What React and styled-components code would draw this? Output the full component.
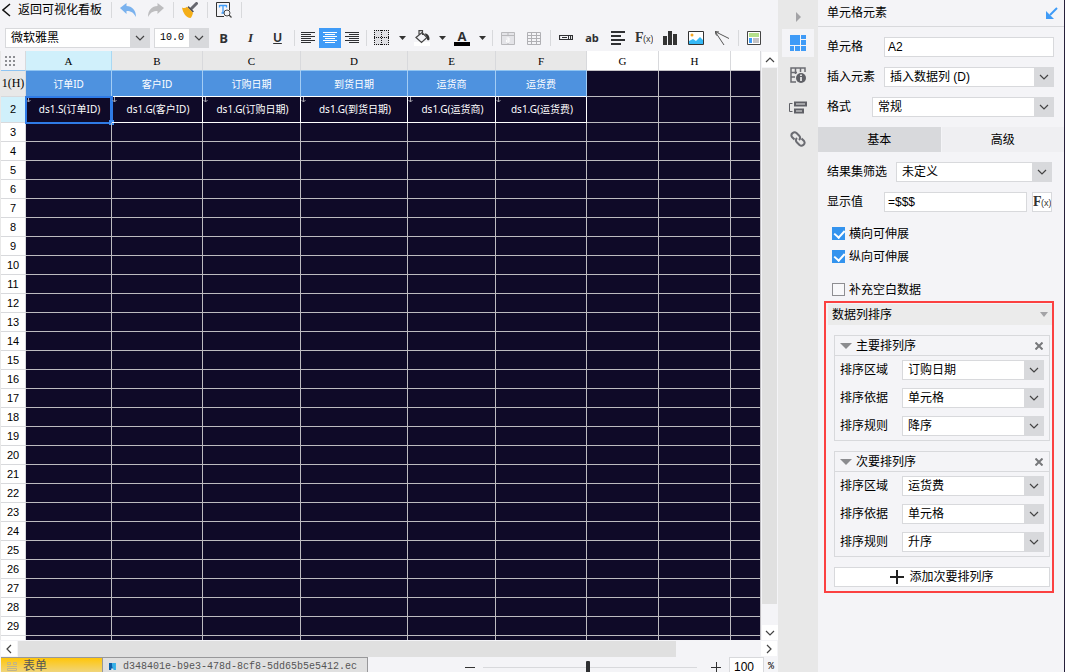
import React from "react";
import styled, { createGlobalStyle, css } from "styled-components";

const sans = `"Liberation Sans", "Noto Sans CJK SC", sans-serif`;
const mono = `"Liberation Mono", "Noto Sans CJK SC", monospace`;
const color = {
  page: "#f4f4f7",
  line: "#d8d9dc",
  strip: "#e8e8e8",
  blue: "#3f9bf7",
  cell: "#0f0a28",
  ink: "#2f3033",
};

const GlobalStyle = createGlobalStyle`
  * { box-sizing: border-box; }
  body { margin: 0; background: ${color.page}; color: #000; font: 12px/16px ${sans}; }
  button, input, select { font: inherit; color: inherit; margin: 0; padding: 0; border: 0; border-radius: 0; background: none; outline: none; }
  svg { display: block; }
`;

const Shell = styled.div`
  display: flex;
  height: 100vh;
  overflow: hidden;
`;
const Workspace = styled.main`
  flex: 1;
  min-width: 0;
  display: flex;
  flex-direction: column;
`;
const TopBar = styled.header`
  display: flex;
  align-items: center;
  height: 20px;
`;
const BackButton = styled.button`
  display: flex;
  align-items: center;
  gap: 7px;
  width: 108px;
  padding-left: 2px;
  white-space: nowrap;
`;
const Toolbar = styled.div`
  display: flex;
  align-items: center;
  height: 31px;
  padding: 5px 0 0 5px;
`;
const Separator = styled.i`
  flex: none;
  width: 1px;
  height: 16px;
  margin: 0 2px 0 3px;
  background: ${color.line};
`;
const Tool = styled.button`
  flex: none;
  display: flex;
  align-items: center;
  justify-content: center;
  width: ${(p) => p.$w || 26}px;
  height: 20px;
  background: ${(p) => (p.$active ? color.blue : "none")};
  color: ${(p) => (p.$active ? "#fff" : color.ink)};
`;
const Letter = styled.span`
  font: ${(p) => p.$font};
  text-decoration: ${(p) => (p.$underline ? "underline" : "none")};
`;
const ColorLetter = styled.span`
  width: 16px;
  height: 16px;
  border-bottom: 4px solid #000;
  font: bold 13px/12px "Open Sans", sans-serif;
  text-align: center;
`;
const FontControls = styled.div`
  display: flex;
  gap: 4px;
  margin-right: 1px;
`;

const SelectBox = styled.div`
  display: grid;
  grid-template-columns: minmax(0, 1fr) 20px;
  flex: ${(p) => (p.$w ? "none" : 1)};
  width: ${(p) => (p.$w ? p.$w + "px" : "auto")};
  min-width: 0;
  height: 20px;
  border: 1px solid ${color.line};
  border-right: 0;
  background: #fff;
`;
const NativeSelect = styled.select`
  grid-area: 1 / 1 / 2 / 3;
  appearance: none;
  width: 100%;
  height: 18px;
  padding: 0 20px 0 5px;
  font-family: ${(p) => (p.$mono ? mono : sans)};
  font-size: ${(p) => (p.$mono ? 10 : 12)}px;
`;
const SelectArrow = styled.span`
  grid-area: 1 / 2;
  display: flex;
  align-items: center;
  justify-content: center;
  background: ${color.line};
  pointer-events: none;
`;

const GridArea = styled.section`
  flex: 1;
  min-height: 0;
  display: flex;
`;
const GridView = styled.div`
  flex: 1;
  min-width: 0;
  overflow: hidden;
  border-left: 1px solid ${color.strip};
  background: ${color.cell};
`;
const Sheet = styled.table`
  width: 100%;
  table-layout: fixed;
  border-collapse: separate;
  border-spacing: 0;
`;
const Row = styled.tr`
  height: ${(p) => p.$h}px;
`;
const headBg = { selected: "#d0f0fb", used: "#e8e8e8", empty: "#fff" };
const ColHead = styled.th`
  padding: 2px 0 0;
  border-right: 1px solid ${(p) => (p.$state === "selected" ? "#a8d8f4" : color.line)};
  border-bottom: 1px solid ${(p) => (p.$state === "empty" ? "#c4c2c6" : "#8fc4f2")};
  background: ${(p) => headBg[p.$state]};
  font: 11px/17px "Liberation Serif", serif;
`;
const Corner = styled(ColHead)`
  background: ${color.page};
  svg { margin: 0 auto 0 4px; }
`;
const RowHead = styled.th`
  padding: 0;
  border-right: 1px solid ${color.line};
  border-bottom: 1px solid ${color.line};
  background: ${(p) => headBg[p.$state]};
  font: ${(p) => (p.$serif ? `12px/17px "Liberation Serif", serif` : `11px/17px ${sans}`)};
  white-space: nowrap;
`;
const Cell = styled.td`
  position: relative;
  padding: 0;
  border-right: 1px solid #bdbbc0;
  border-bottom: 1px solid #bdbbc0;
  font: 10px/16px "Noto Sans", "Noto Sans CJK SC", sans-serif;
  text-align: center;
  white-space: nowrap;
  color: #fff;
  ${(p) => p.$kind === "title" && css`
    background: #4e92df;
    border-right-color: #a3cdf5;
    border-bottom-color: #fff;
  `}
  ${(p) => p.$kind === "field" && css`
    padding: 0 0 2px 2px;
    border-color: #fff;
  `}
`;
const ExpandMark = styled.svg`
  position: absolute;
  left: 0;
  top: 0;
`;
const Selection = styled.span`
  position: absolute;
  inset: -1px -2px -2px -1px;
  border: 3px solid #2f7be6;
  border-width: 2px 3px 2px 2px;
  &::after {
    content: "";
    position: absolute;
    right: -4px;
    bottom: -3px;
    width: 5px;
    height: 5px;
    background: #3f8cf0;
  }
`;

const VScroll = styled.div`
  flex: none;
  display: flex;
  flex-direction: column;
  width: 17px;
  padding: 1px 1px 0 1px;
`;
const HScroll = styled.div`
  flex: none;
  display: flex;
  height: 17px;
  padding: 1px 1px 0 1px;
`;
const ScrollButton = styled.button`
  flex: none;
  display: flex;
  align-items: center;
  justify-content: center;
  width: 16px;
  height: 15px;
  background: #fff;
`;
const VThumb = styled.div`
  flex: 25;
  margin-top: 1px;
  background: #e0e0e0;
`;
const HThumb = styled.div`
  flex: 31;
  margin-left: 1px;
  background: #e0e0e0;
`;
const Rest = styled.div`
  flex: ${(p) => p.$grow};
`;

const StatusBar = styled.footer`
  flex: none;
  display: flex;
  align-items: flex-start;
  height: 15px;
  overflow: hidden;
  padding-left: 1px;
`;
const SheetTab = styled.button`
  display: flex;
  align-items: center;
  gap: ${(p) => (p.$current ? 6 : 7)}px;
  height: 20px;
  padding: 0 10px 2px 6px;
  width: ${(p) => (p.$current ? 101 : 266)}px;
  border: 1px solid #98989a;
  border-left-width: ${(p) => (p.$current ? 0 : 1)}px;
  border-right-width: ${(p) => (p.$current ? 0 : 1)}px;
  background: ${(p) => (p.$current ? "linear-gradient(#ffc60a, #ecd99a)" : "#e0e0e0")};
  color: #555;
  font: ${(p) => (p.$current ? `12px/15px ${sans}` : `10px/15px ${mono}`)};
  white-space: nowrap;
`;
const Zoom = styled.div`
  display: flex;
  align-items: center;
  height: 20px;
  margin-left: auto;
`;
const ZoomButton = styled.button`
  display: flex;
  justify-content: center;
  width: 18px;
`;
const ZoomSlider = styled.input`
  appearance: none;
  width: 214px;
  height: 12px;
  margin: 0 10px 0 4px;
  &::-webkit-slider-runnable-track { height: 1px; background: ${color.line}; }
  &::-webkit-slider-thumb {
    appearance: none;
    width: 4px;
    height: 12px;
    margin-top: -6px;
    border-radius: 1px;
    background: ${color.ink};
  }
`;
const ZoomValue = styled.input`
  width: 35px;
  height: 20px;
  padding: 0 0 0 4px;
  margin-left: 4px;
  border: 1px solid ${color.line};
  background: #fff;
  font-size: 12px;
`;
const Percent = styled.span`
  width: 14px;
  font: 10px/16px ${mono};
  text-align: center;
`;

const SideStrip = styled.nav`
  flex: none;
  display: flex;
  flex-direction: column;
  gap: 4px;
  align-items: center;
  width: 40px;
  padding-top: 9px;
  background: ${color.strip};
`;
const SideItem = styled.button`
  display: flex;
  align-items: center;
  justify-content: center;
  width: 32px;
  height: ${(p) => (p.$small ? 16 : 28)}px;
  background: ${(p) => (p.$active ? color.page : "none")};
`;

const Panel = styled.aside`
  flex: none;
  width: 247px;
  border-right: 1px solid #26203a;
`;
const PanelTitle = styled.div`
  display: flex;
  align-items: center;
  justify-content: space-between;
  height: 27px;
  padding: 0 6px 0 9px;
  border-bottom: 1px solid ${color.line};
`;
const Fields = styled.div`
  display: flex;
  flex-direction: column;
  gap: 10px;
  padding: 10px ${(p) => p.$right || 10}px 0 9px;
`;
const Field = styled.div`
  display: flex;
  align-items: center;
`;
const Label = styled.label`
  flex: none;
  width: ${(p) => p.$w}px;
  white-space: nowrap;
`;
const TextBox = styled.input`
  flex: 1;
  min-width: 0;
  height: 20px;
  padding: 0 4px 0 3px;
  border: 1px solid ${color.line};
  background: #fff;
`;
const FormulaButton = styled.button`
  display: flex;
  align-items: center;
  justify-content: center;
  width: 20px;
  height: 20px;
  margin-left: 5px;
  border: 1px solid ${color.line};
  background: #fff;
`;
const Tabs = styled.div`
  display: grid;
  grid-template-columns: 1fr 1fr;
  gap: 1px;
  height: 25px;
  margin-top: 10px;
`;
const Tab = styled.button`
  background: ${(p) => (p.$active ? "#d8d9dc" : "#efeff2")};
`;
const Checks = styled.div`
  display: flex;
  flex-direction: column;
  padding: 10px 0 0 14px;
`;
const CheckRow = styled.label`
  display: flex;
  align-items: center;
  gap: 4px;
  height: 23px;
  margin-top: ${(p) => (p.$apart ? 10 : 0)}px;
`;
const CheckBox = styled.input`
  appearance: none;
  width: 13px;
  height: 13px;
  border: 1px solid #8e8e92;
  background: #f8f8fa;
  &:checked { border-color: #3393ee; background: #3393ee; }
  &:checked::after {
    content: "";
    display: block;
    width: 5px;
    height: 8px;
    margin: 0 0 0 3px;
    border: solid #fff;
    border-width: 0 2px 2px 0;
    transform: rotate(42deg);
  }
`;

const SortSection = styled.section`
  margin: 0 10px 0 6px;
  padding: 1px 0 4px 2px;
  border: 2px solid #fb4141;
`;
const SortTitle = styled.button`
  display: flex;
  align-items: center;
  justify-content: space-between;
  width: 100%;
  height: 21px;
  padding: 0 4px 0 4px;
  background: #ebebeb;
`;
const SortBody = styled.div`
  display: flex;
  flex-direction: column;
  gap: 10px;
  padding: 10px 2px 0 6px;
`;
const SortGroup = styled.div`
  border: 1px solid ${color.line};
`;
const GroupHead = styled.div`
  display: flex;
  align-items: center;
  height: 20px;
  padding: 0 6px 0 5px;
  gap: 4px;
  border-bottom: 1px solid ${color.line};
`;
const GroupName = styled.span`
  flex: 1;
`;
const GroupFields = styled.div`
  display: flex;
  flex-direction: column;
  gap: 8px;
  padding: 4px 5px;
`;
const AddButton = styled.button`
  display: flex;
  align-items: center;
  justify-content: center;
  gap: 5px;
  height: 20px;
  border: 1px solid ${color.line};
  background: #fff;
`;

function Icon({ w = 16, h = 16, children, ...rest }) {
  return (
    <svg width={w} height={h} viewBox={`0 0 ${w} ${h}`} fill="none" stroke="currentColor" aria-hidden="true" {...rest}>
      {children}
    </svg>
  );
}
const chevrons = {
  down: "M1 3l4 4 4-4",
  up: "M1 7l4-4 4 4",
  left: "M7 1L3 5l4 4",
  right: "M3 1l4 4-4 4",
};
const Chevron = ({ to = "down" }) => (
  <Icon w={10} h={10} stroke="#444" strokeWidth="1.2"><path d={chevrons[to]} /></Icon>
);
const Caret = ({ fill = "#333", w = 7, h = 4 }) => (
  <Icon w={w} h={h} stroke="none"><path fill={fill} d={`M0 0H${w}L${w / 2} ${h}Z`} /></Icon>
);
const Lines = ({ rows, ...rest }) => (
  <Icon {...rest} shapeRendering="crispEdges">
    {rows.map(([x, w], i) => <path key={i} d={`M${x} ${2.5 + i * 2}h${w}`} />)}
  </Icon>
);
const Fx = () => (
  <Icon w={18} h={16} stroke="none" fill="#333">
    <text x="0" y="12" fontFamily="Liberation Serif, serif" fontSize="14" fontWeight="bold">F</text>
    <text x="8" y="12" fontFamily="Liberation Sans, sans-serif" fontSize="9">(x)</text>
  </Icon>
);

function Select({ id, label, value, w, mono: isMono }) {
  return (
    <SelectBox $w={w}>
      <NativeSelect id={id} aria-label={label} defaultValue={value} $mono={isMono}>
        <option>{value}</option>
      </NativeSelect>
      <SelectArrow><Chevron /></SelectArrow>
    </SelectBox>
  );
}

const columns = [
  ["A", 86, "订单ID", "ds1.S(订单ID)"],
  ["B", 91, "客户ID", "ds1.G(客户ID)"],
  ["C", 98, "订购日期", "ds1.G(订购日期)"],
  ["D", 107, "到货日期", "ds1.G(到货日期)"],
  ["E", 88, "运货商", "ds1.G(运货商)"],
  ["F", 91, "运货费", "ds1.G(运货费)"],
  ["G", 72],
  ["H", 72],
  [""],
];
const emptyRows = [...Array.from({ length: 27 }, (_, i) => i + 3), ""];

function Spreadsheet() {
  return (
    <Sheet>
      <colgroup>
        <col width="25" />
        {columns.map(([name, w]) => <col key={name} width={w} />)}
      </colgroup>
      <thead>
        <Row $h={20}>
          <Corner $state="used">
            <Icon w={12} h={11} stroke="none" fill="#8d8e92">
              {[0, 4, 8].map((y) => [0, 4, 8].map((x) => <rect key={`${x}-${y}`} x={x} y={y} width="2" height="2" />))}
            </Icon>
          </Corner>
          {columns.map(([name, , title], i) => (
            <ColHead key={name} $state={i === 0 ? "selected" : title ? "used" : "empty"}>{name}</ColHead>
          ))}
        </Row>
      </thead>
      <tbody>
        <Row $h={26}>
          <RowHead $state="used" $serif>1(H)</RowHead>
          {columns.map(([name, , title]) => <Cell key={name} $kind={title && "title"}>{title}</Cell>)}
        </Row>
        <Row $h={26}>
          <RowHead $state="selected">2</RowHead>
          {columns.map(([name, , , field], i) => (
            <Cell key={name} $kind={field && "field"}>
              {field && (
                <ExpandMark width="6" height="7" fill="none" stroke="#a5a3ad">
                  <path d="M2.5 0v5M0.5 3l2 2 2-2" />
                </ExpandMark>
              )}
              {field}
              {i === 0 && <Selection />}
            </Cell>
          ))}
        </Row>
        {emptyRows.map((n) => (
          <Row key={n} $h={19}>
            <RowHead $state="empty">{n}</RowHead>
            {columns.map(([name]) => <Cell key={name} />)}
          </Row>
        ))}
      </tbody>
    </Sheet>
  );
}

const DropTool = ({ label, children }) => (
  <>
    <Tool aria-label={label}>{children}</Tool>
    <Tool $w={14} aria-label={`${label}选项`}><Caret /></Tool>
  </>
);

function Ribbon() {
  return (
    <>
      <TopBar>
        <BackButton>
          <Icon w={9} h={14} stroke="#111" strokeWidth="1.5"><path d="M8 1L1 7l7 6" /></Icon>
          返回可视化看板
        </BackButton>
        <Separator />
        <Tool $w={28} aria-label="撤销">
          <Icon stroke="none" fill="#7ab2ee"><path d="M0 6L6.500 1v3C12 4 16 8 16 15 13.500 10.500 11 9 6.500 9v3z" /></Icon>
        </Tool>
        <Tool $w={28} aria-label="重做">
          <Icon stroke="none" fill="#bdbdbf"><path d="M16 6L9.500 1v3C4 4 0 8 0 15 2.500 10.500 5 9 9.500 9v3z" /></Icon>
        </Tool>
        <Separator />
        <Tool $w={28} aria-label="格式刷">
          <Icon stroke="none">
            <path d="M14.500 1.500L9.500 6.500" stroke="#66676f" strokeWidth="3" strokeLinecap="round" />
            <path d="M6.500 4l5.500 5.500-1.500 1-5-5z" fill="#55555a" />
            <path d="M0 5.500c2 1 3.500.5 5-.8l6 6C10.500 13.500 9.500 15 8.500 16 4 15.500 1 11 0 5.500z" fill="#f4ae18" />
          </Icon>
        </Tool>
        <Separator />
        <Tool $w={28} aria-label="查找">
          <Icon>
            <path d="M8 14.500H.500V.500h13V8" stroke="#333" />
            <path d="M3.500 3.500h7M7 3.500v7.500M3.500 3v2.500M10.500 3v2.500M5.500 11h3" stroke={color.blue} strokeWidth="1.300" />
            <circle cx="11" cy="11" r="3" stroke="#444" fill="#f4f4f7" />
            <path d="M13 13l2.500 2.500" stroke="#444" strokeWidth="1.300" />
          </Icon>
        </Tool>
        <Separator />
      </TopBar>
      <Toolbar>
        <FontControls>
          <Select label="字体" value="微软雅黑" w={145} />
          <Select label="字号" value="10.0" w={55} mono />
        </FontControls>
        <Tool $w={27}><Letter $font={`bold 13px/16px "Open Sans", sans-serif`}>B</Letter></Tool>
        <Tool $w={27}><Letter $font={`italic bold 13px/16px "Liberation Serif", serif`}>I</Letter></Tool>
        <Tool $w={27}><Letter $font={`bold 12px/16px ${sans}`} $underline>U</Letter></Tool>
        <Separator />
        <Tool $w={22} aria-label="左对齐"><Lines rows={[[1, 14], [1, 10], [1, 14], [1, 10], [1, 14], [1, 10]]} /></Tool>
        <Tool $w={22} $active aria-label="居中"><Lines rows={[[1, 14], [3, 10], [1, 14], [3, 10], [1, 14], [3, 10]]} /></Tool>
        <Tool $w={22} aria-label="右对齐"><Lines rows={[[1, 14], [5, 10], [1, 14], [5, 10], [1, 14], [5, 10]]} /></Tool>
        <Separator />
        <DropTool label="边框">
          <Icon stroke="#111" strokeDasharray="1 1" shapeRendering="crispEdges">
            <path d="M0 0h15v15H0z" fill="#dfdfe3" stroke="none" />
            <path d="M0 .5h15M0 14.500h15M.5 0v15M14.500 0v15M0 7.500h15M7.500 0v15" />
          </Icon>
        </DropTool>
        <DropTool label="填充颜色">
          <Icon stroke="#444" strokeWidth="1.200">
            <path d="M0 12h16v4H0z" fill="#fff" stroke="none" />
            <path d="M2 7.500L8 2.500l5 5-5.500 5zM5 6V.6h3.500V5" />
            <path d="M10.500 3.500c3 0 5 2 5 5.500 0 1.800-2.500 1.800-2.500 0V7z" fill="#333" stroke="none" />
          </Icon>
        </DropTool>
        <DropTool label="文字颜色"><ColorLetter>A</ColorLetter></DropTool>
        <Separator />
        <Tool aria-label="合并单元格">
          <Icon w={15} h={15} stroke="#b9b9bc">
            <path d="M.5 1.500h13v12H.5z" fill="#e4e4e8" /><path d="M.5 4.500h13M7 1.500v3M7 12v1.500" />
            <path d="M5.500 7h2.500v4H5.500V9H8" stroke="#fff" />
          </Icon>
        </Tool>
        <Tool aria-label="取消合并">
          <Icon w={15} h={15} stroke="#b0b0b4">
            <path d="M.5 1.500h13v12H.5zM.5 4.500h13M.5 7.500h13M.5 10.500h13M4.500 1.500v12M9.500 1.500v12" />
          </Icon>
        </Tool>
        <Separator />
        <Tool aria-label="控件">
          <Icon w={14} h={6}><path d="M.5 .5h13v4H.5z" strokeWidth="1.200" /><path d="M3 2.500h5M9.500 1v3M11.500 1v3" /></Icon>
        </Tool>
        <Tool><Letter $font={`bold 11px/16px "Open Sans", sans-serif`}>ab</Letter></Tool>
        <Tool aria-label="富文本">
          <Icon w={14} h={14} strokeWidth="2" shapeRendering="crispEdges"><path d="M0 1h14M0 5h10M0 9h14M0 13h10" /></Icon>
        </Tool>
        <Tool aria-label="公式"><Fx /></Tool>
        <Tool aria-label="图表">
          <Icon w={14} h={14} stroke="none" fill="#333"><path d="M0 5h4v9H0zM5 0h4v14H5zM10 3h4v11h-4z" /></Icon>
        </Tool>
        <Tool aria-label="图片">
          <Icon h={14}>
            <path d="M.5 .5h15v13H.5z" fill="#fff" stroke="#333" />
            <circle cx="4" cy="4" r="1.500" fill="#f5a623" stroke="none" />
            <path d="M1 13v-3l4-2 3 2 4-4 3 3v4z" fill="#35b8f5" stroke="none" />
          </Icon>
        </Tool>
        <Tool aria-label="斜线">
          <Icon w={14} h={14}><path d="M0 .5l14 7M0 .5L9 14M0 .5l1.500 4M0 .5l4 .5" stroke="#555" /></Icon>
        </Tool>
        <Separator />
        <Tool aria-label="子报表">
          <Icon w={14} h={14} stroke="none">
            <path d="M.5 .5h13v13H.5z" fill="#fff" stroke="#444" />
            <path d="M2 2h10v4H2z" fill="#b5e08a" /><path d="M2 7h3v5H2z" fill="#3f9bf7" /><path d="M6 7h6v5H6z" fill="#c2c2c5" />
          </Icon>
        </Tool>
      </Toolbar>
    </>
  );
}

function BottomBar() {
  return (
    <StatusBar>
      <SheetTab $current>
        <Icon w={10} h={9} stroke="#c0b489"><path d="M.5 .5h3v2h-3zM6.500 .5h3v2h-3zM0 4.500h10M.5 6.500h9v2h-9z" /></Icon>
        表单
      </SheetTab>
      <SheetTab>
        <Icon w={9} h={9} stroke="none"><path fill="#0b5ea8" d="M0 0h4l1 4v5H0z" /><path fill="#36b1e8" d="M4 0h5v9H6L4 4z" /><path fill="#fff" d="M3 7h2v2H3z" /></Icon>
        d348401e-b9e3-478d-8cf8-5dd65b5e5412.ec
      </SheetTab>
      <Zoom>
        <ZoomButton aria-label="缩小"><Icon w={10} h={10} stroke="#333" strokeWidth="1"><path d="M0 5.500h10" /></Icon></ZoomButton>
        <ZoomSlider type="range" aria-label="缩放" min="0" max="100" defaultValue="49" />
        <ZoomButton aria-label="放大"><Icon w={10} h={10} stroke="#333" strokeWidth="1"><path d="M0 5.500h10M5.500 0v10" /></Icon></ZoomButton>
        <ZoomValue aria-label="缩放比例" defaultValue="100" />
        <Percent>%</Percent>
      </Zoom>
    </StatusBar>
  );
}

function SideNav() {
  return (
    <SideStrip>
      <SideItem $small aria-label="收起">
        <Icon w={5} h={10} stroke="none" fill="#a3a3a6"><path d="M0 0l5 5-5 5z" /></Icon>
      </SideItem>
      <SideItem $active aria-label="单元格元素">
        <Icon stroke="none" fill={color.blue}><path d="M0 0h10v10H0zM11 0h5v4h-5zM11 5h5v5h-5zM0 11h4v5H0zM5 11h5v5H5zM11 11h5v5h-5z" /></Icon>
      </SideItem>
      <SideItem aria-label="单元格属性">
        <Icon stroke="#6b6c72" strokeWidth="1.500">
          <path d="M6 15H1V1h14v4M1 5.500h6M1 10h4M5.500 1v6M10.500 1v4" />
          <circle cx="11" cy="11" r="5" fill="#5f6066" stroke="none" />
          <path d="M11 10v4M11 7.500v1.500" stroke="#fff" />
        </Icon>
      </SideItem>
      <SideItem aria-label="悬浮元素">
        <Icon w={18} h={14} stroke="#5f6066" strokeWidth="2">
          <path d="M6 2.500h11v3H6zM6 9.500h8v3H6z" /><path d="M3.500 3.500h-3v8h3" strokeWidth="1" />
        </Icon>
      </SideItem>
      <SideItem aria-label="超级链接">
        <Icon stroke="#6b6c72" strokeWidth="2">
          <path d="M9 9c2-2 1-3.500 0-4.500L6.500 2C4 0 0 3 2 6l2.500 2.500M7 7c-2 2-1 3.500 0 4.500L9.500 14C12 16 16 13 14 10l-2.500-2.500" />
        </Icon>
      </SideItem>
    </SideStrip>
  );
}

function SortBlock({ id, name, rows }) {
  return (
    <SortGroup>
      <GroupHead>
        <Caret w={12} h={6} fill="#8b8c8f" />
        <GroupName>{name}</GroupName>
        <button aria-label={`删除${name}`}>
          <Icon w={8} h={8} stroke="#77787b" strokeWidth="2"><path d="M.5 .5l7 7M7.500 .5l-7 7" /></Icon>
        </button>
      </GroupHead>
      <GroupFields>
        {rows.map(([label, value], i) => (
          <Field key={label}>
            <Label $w={62} htmlFor={`${id}-${i}`}>{label}</Label>
            <Select id={`${id}-${i}`} value={value} />
          </Field>
        ))}
      </GroupFields>
    </SortGroup>
  );
}

function PropertyPanel() {
  return (
    <Panel>
      <PanelTitle>
        单元格元素
        <Icon w={12} h={12} stroke={color.blue} strokeWidth="2">
          <path d="M11 1L4 8" /><path d="M0 4v8h8z" fill={color.blue} stroke="none" />
        </Icon>
      </PanelTitle>
      <Fields>
        <Field><Label $w={57} htmlFor="cell">单元格</Label><TextBox id="cell" defaultValue="A2" /></Field>
        <Field><Label $w={57} htmlFor="element">插入元素</Label><Select id="element" value="插入数据列 (D)" /></Field>
        <Field><Label $w={45} htmlFor="format">格式</Label><Select id="format" value="常规" /></Field>
      </Fields>
      <Tabs>
        <Tab $active>基本</Tab>
        <Tab>高级</Tab>
      </Tabs>
      <Fields $right={12}>
        <Field><Label $w={69} htmlFor="filter">结果集筛选</Label><Select id="filter" value="未定义" /></Field>
        <Field>
          <Label $w={57} htmlFor="display">显示值</Label>
          <TextBox id="display" defaultValue="=$$$" />
          <FormulaButton aria-label="公式"><Fx /></FormulaButton>
        </Field>
      </Fields>
      <Checks>
        <CheckRow><CheckBox type="checkbox" defaultChecked />横向可伸展</CheckRow>
        <CheckRow><CheckBox type="checkbox" defaultChecked />纵向可伸展</CheckRow>
        <CheckRow $apart><CheckBox type="checkbox" />补充空白数据</CheckRow>
      </Checks>
      <SortSection>
        <SortTitle>数据列排序<Caret w={8} h={5} fill="#a3a3a6" /></SortTitle>
        <SortBody>
          <SortBlock id="primary" name="主要排列序" rows={[["排序区域", "订购日期"], ["排序依据", "单元格"], ["排序规则", "降序"]]} />
          <SortBlock id="secondary" name="次要排列序" rows={[["排序区域", "运货费"], ["排序依据", "单元格"], ["排序规则", "升序"]]} />
          <AddButton>
            <Icon w={14} h={14} stroke="#222" strokeWidth="2"><path d="M0 7h14M7 0v14" /></Icon>
            添加次要排列序
          </AddButton>
        </SortBody>
      </SortSection>
    </Panel>
  );
}

export default function App() {
  return (
    <Shell>
      <GlobalStyle />
      <Workspace>
        <Ribbon />
        <GridArea>
          <GridView><Spreadsheet /></GridView>
          <VScroll>
            <ScrollButton aria-label="向上"><Chevron to="up" /></ScrollButton>
            <VThumb />
            <Rest $grow={1} />
            <ScrollButton aria-label="向下"><Chevron /></ScrollButton>
          </VScroll>
        </GridArea>
        <HScroll>
          <ScrollButton aria-label="向左"><Chevron to="left" /></ScrollButton>
          <HThumb />
          <Rest $grow={4} />
          <ScrollButton aria-label="向右"><Chevron to="right" /></ScrollButton>
        </HScroll>
        <BottomBar />
      </Workspace>
      <SideNav />
      <PropertyPanel />
    </Shell>
  );
}
